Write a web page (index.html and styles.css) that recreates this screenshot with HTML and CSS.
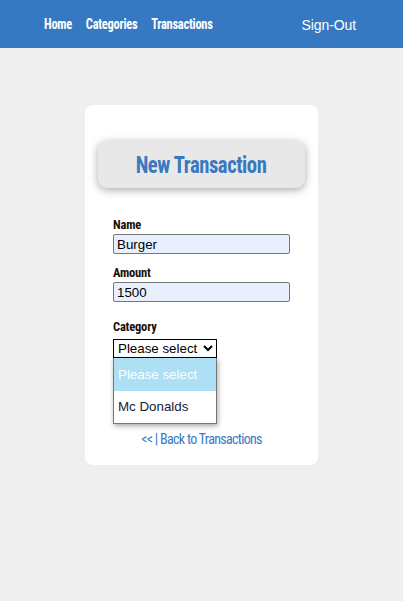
FILE: index.html
```html
<!DOCTYPE html>
<html>
<head>
<meta charset="utf-8">
<link rel="stylesheet" href="styles.css">
</head>
<body>
<nav class="navbar">
  <div class="nav-left">
    <a class="nav-link" href="#">Home</a>
    <a class="nav-link" href="#">Categories</a>
    <a class="nav-link" href="#">Transactions</a>
  </div>
  <a class="nav-signout" href="#">Sign-Out</a>
</nav>
<main class="main">
  <section class="card">
    <div class="card-title"><span class="card-title-text">New Transaction</span></div>
    <form class="form">
      <label class="label">Name</label>
      <input class="input" type="text" value="Burger">
      <label class="label">Amount</label>
      <input class="input" type="text" value="1500">
      <label class="label label-cat">Category</label>
      <div class="select-wrap">
        <select class="select">
          <option>Please select</option>
          <option>Mc Donalds</option>
        </select>
        <ul class="dropdown">
          <li class="dd-item dd-active">Please select</li>
          <li class="dd-item">Mc Donalds</li>
        </ul>
      </div>
    </form>
    <a class="back-link" href="#">&lt;&lt; | Back to Transactions</a>
  </section>
</main>
</body>
</html>
```
FILE: styles.css
```css
* { box-sizing: border-box; }
body {
  margin: 0;
  background: #efefef;
  font-family: Roboto, "Liberation Sans", sans-serif;
}
.navbar {
  height: 48px;
  background: #3778c2;
  display: flex;
  align-items: center;
  justify-content: space-between;
  padding: 1px 47px 0 44px;
}
.nav-left {
  display: flex;
  gap: 16px;
  transform: scaleX(0.86);
  transform-origin: left center;
}
.nav-link {
  color: #fff;
  text-decoration: none;
  font-family: Roboto, sans-serif;
  font-stretch: 75%;
  font-weight: bold;
  font-size: 14.5px;
  letter-spacing: -0.3px;
}
.nav-signout {
  color: #fff;
  text-decoration: none;
  font-family: "Liberation Sans", Arial, sans-serif;
  font-size: 14px;
  letter-spacing: -0.1px;
}
.main {
  display: flex;
  justify-content: center;
  padding-top: 57px;
}
.card {
  width: 233px;
  height: 360px;
  background: #fff;
  border-radius: 8px;
  padding: 36px 13px 0;
  display: flex;
  flex-direction: column;
}
.card-title {
  height: 47px;
  background: #e8e8e8;
  border-radius: 9px;
  box-shadow: 0 2px 8px rgba(0,0,0,0.35);
  display: flex;
  align-items: center;
  justify-content: center;
}
.card-title-text {
  display: inline-block;
  color: #3a78c2;
  font-family: Roboto, sans-serif;
  font-stretch: 75%;
  font-weight: bold;
  font-size: 24px;
  letter-spacing: -0.5px;
  transform: scaleX(0.86);
}
.form {
  display: flex;
  flex-direction: column;
  align-items: flex-start;
  padding: 0 15px;
  margin-top: 30px;
}
.label {
  font-family: Roboto, sans-serif;
  font-stretch: 75%;
  font-weight: bold;
  font-size: 12.5px;
  letter-spacing: -0.2px;
  color: #1a1008;
  line-height: 14px;
  margin-bottom: 2px;
}
.input {
  width: 177px;
  height: 20px;
  margin: 0 0 12px;
  padding: 1px 3px;
  border: 1px solid #767676;
  border-radius: 2px;
  background: #e8f0fe;
  font-family: "Liberation Sans", Arial, sans-serif;
  font-size: 13.33px;
  color: #000;
}
.label-cat { margin-top: 6px; margin-bottom: 5px; }
.select-wrap { position: relative; }
.select {
  display: block;
  width: 104px;
  height: 19px;
  font-family: "Liberation Sans", Arial, sans-serif;
  font-size: 13.33px;
  border: 1px solid #000;
  border-radius: 0;
  background: #fff;
  color: #000;
}
.dropdown {
  position: absolute;
  left: 0;
  top: 19px;
  width: 104px;
  margin: 0;
  padding: 0;
  list-style: none;
  background: #fff;
  border: 1px solid #767676;
  border-top: 0;
  box-shadow: 1px 2px 5px rgba(0,0,0,0.35);
  font-family: "Liberation Sans", Arial, sans-serif;
  font-size: 13.33px;
}
.dd-item {
  height: 32px;
  line-height: 32px;
  padding-left: 4px;
  color: #1a1a3a;
}
.dd-active {
  height: 33px;
  line-height: 34px;
  background: #ade0f5;
  color: #fff;
}
.back-link {
  margin-top: 73px;
  align-self: center;
  color: #3a78c2;
  text-decoration: none;
  font-family: Roboto, sans-serif;
  font-stretch: 75%;
  font-size: 14px;
  letter-spacing: -0.7px;
}
```
